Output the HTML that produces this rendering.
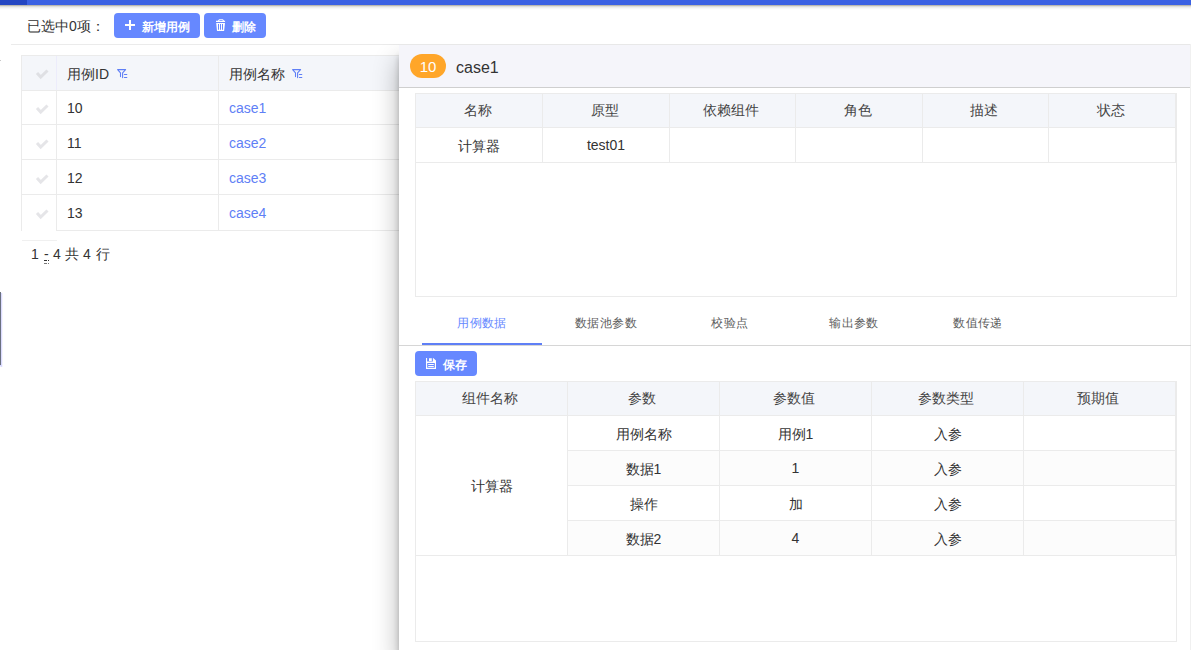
<!DOCTYPE html>
<html><head><meta charset="utf-8">
<style>
*{box-sizing:border-box;margin:0;padding:0}
html,body{width:1191px;height:650px;overflow:hidden;background:#fff;font-family:"Liberation Sans",sans-serif;color:#333;position:relative}
.abs{position:absolute}
#topbar{left:0;top:0;width:1191px;height:5px;background:#3b61e3}
#topbar .dk{position:absolute;left:0;top:0;width:27px;height:5px;background:#2446c2}
#topshadow{left:0;top:5px;width:1191px;height:5px;background:linear-gradient(rgba(40,30,0,.4),rgba(20,15,0,.14) 30%,rgba(0,0,0,.05) 55%,rgba(0,0,0,.01) 85%,rgba(0,0,0,0))}
#selinfo{left:27px;top:17px;font-size:14px;line-height:18px;color:#333}
.btn{position:absolute;height:25px;background:#6688ff;border-radius:4px;color:#fff;font-size:12px;font-weight:bold;line-height:25px}
.btn span{position:absolute;top:1.5px}
#hline{left:11px;top:44px;width:390px;height:1px;background:#ebebeb}
/* left table */
#lt{left:21px;top:55px;width:400px;height:176px}
.lcell{position:absolute;border-right:1px solid #ebebeb;border-bottom:1px solid #ebebeb}
#lthead{left:21px;top:55px;width:380px;height:36px;background:#f4f6fa;border-top:1px solid #ebebeb}
.chk{position:absolute}
.ltxt{position:absolute;font-size:14px;line-height:18px}
.link{color:#5f7ff6}
.pg{position:absolute;top:245px;font-size:14px;line-height:18px}
/* panel */
#pwrap{left:0;top:44px;width:1191px;height:606px;overflow:hidden}
#panel{left:399px;top:0;width:792px;height:606px;background:#fff;border-right:1px solid #f0f0f0;box-shadow:0 12px 6px rgba(0,0,0,.2),0 16px 24px rgba(0,0,0,.3)}
#phead{left:0;top:0;width:791px;height:44px;background:#f5f5fa;border-bottom:1px solid #cfcfcf;border-top:1px solid #e8e8e8}
#badge{left:11px;top:9px;width:36px;height:24px;border-radius:12px;background:#ffa629;color:#fff;font-size:15px;line-height:26px;text-align:center}
#ptitle{left:57px;top:12.5px;font-size:16px;line-height:20px;color:#333}
table{border-collapse:collapse;table-layout:fixed;position:absolute}
td,th{border:1px solid #ebebeb;text-align:center;font-size:14px;font-weight:normal;color:#333;padding:0}
td{padding-top:3px}
th{background:#f4f6fa;padding-right:3px;color:#444}
#t1{left:16px;top:49px;width:760px}
#t1box{left:16px;top:49px;width:762px;height:204px;border:1px solid #ebebeb}
#tabs{left:0;top:256px;width:792px;height:46px;border-bottom:1px solid #d6d6d6}
.tab{position:absolute;top:0;width:124px;height:45px;text-align:center;font-size:12px;letter-spacing:0.4px;line-height:47px;color:#606060}
.tab.act{color:#6688ff}
#tabul{left:23px;top:43px;width:120px;height:2px;background:#5f7ff6}
#t2box{left:16px;top:337px;width:762px;height:261px;border:1px solid #ebebeb}
#t2{left:16px;top:337px;width:760px}
.stripe td{background:#fcfcfc}
.up{position:relative;top:-1.5px}
#leftmark{left:0;top:292px;width:1px;height:73px;background:#6b7180}
</style></head><body>
<div id="topbar" class="abs"><div class="dk"></div></div>
<div id="topshadow" class="abs"></div>
<div id="selinfo" class="abs">已选中0项：</div>
<div class="btn" style="left:114px;top:13px;width:86px">
  <svg class="abs" style="left:11px;top:7px" width="10" height="10" viewBox="0 0 10 10"><rect x="0" y="4" width="10" height="2" fill="#fff"/><rect x="4" y="0" width="2" height="10" fill="#fff"/></svg>
  <span style="left:28px">新增用例</span>
</div>
<div class="btn" style="left:204px;top:13px;width:62px">
  <svg class="abs" style="left:12px;top:6px" width="10" height="13" viewBox="0 0 10 13"><path fill="#fff" fill-rule="evenodd" d="M1.8 1.8 L3.1 0.3 H6.9 L8.2 1.8 Z M3.4 0.9 H6.6 V1.8 H3.4 Z M0 1.7 H9.1 V3 H0 Z M0.2 3.9 H9 L8.1 12 H1 Z M2 5.1 H3 V10.7 H2 Z M4 5.1 H5 V10.7 H4 Z M6 5.1 H7 V10.7 H6 Z"/></svg>
  <span style="left:28px">删除</span>
</div>
<div id="hline" class="abs"></div>

<!-- left table -->
<div class="abs" style="left:21px;top:55px;width:380px;height:35px;background:#f4f6fa"></div>
<div class="abs" style="left:21px;top:55px;width:380px;height:1px;background:#ebebeb"></div>
<div class="abs" style="left:21px;top:55px;width:1px;height:176px;background:#ebebeb"></div>
<div class="abs" style="left:56px;top:56px;width:1px;height:34px;background:#ececfb"></div><div class="abs" style="left:56px;top:91px;width:1px;height:140px;background:#ebebeb"></div>
<div class="abs" style="left:218px;top:55px;width:1px;height:176px;background:#ebebeb"></div>
<div class="abs" style="left:21px;top:90px;width:380px;height:1px;background:#ebebeb"></div>
<div class="abs" style="left:21px;top:124px;width:380px;height:1px;background:#ebebeb"></div>
<div class="abs" style="left:21px;top:159px;width:380px;height:1px;background:#ebebeb"></div>
<div class="abs" style="left:21px;top:194px;width:380px;height:1px;background:#ebebeb"></div>
<div class="abs" style="left:56px;top:230px;width:345px;height:1px;background:#ebebeb"></div>
<div class="abs" style="left:22px;top:240px;width:35px;height:1px;background:#f0f0f0"></div>

<svg class="abs" style="left:0;top:0" width="60" height="240">
  <g fill="none" stroke="#dfe0e4" stroke-width="3" stroke-linecap="butt" stroke-linejoin="miter">
    <path d="M37 73 L40.7 77 L47.5 70.5"/>
  </g>
  <g fill="none" stroke="#e5e5e8" stroke-width="3" stroke-linecap="butt" stroke-linejoin="miter">
    <path d="M37 108 L40.7 112 L47.5 105.5"/>
    <path d="M37 143 L40.7 147 L47.5 140.5"/>
    <path d="M37 178 L40.7 182 L47.5 175.5"/>
    <path d="M37 213 L40.7 217 L47.5 210.5"/>
  </g>
</svg>
<div class="ltxt" style="left:67px;top:65px">用例ID</div>
<div class="ltxt" style="left:229px;top:65px">用例名称</div>
<svg class="abs" style="left:112px;top:62px" width="24" height="24" viewBox="0 0 24 24"><g fill="none" stroke="#5f7ff6" stroke-width="1.1" stroke-linecap="round" stroke-linejoin="round"><path d="M8.5 14.6 V10.8 L5.6 7.6 H13.6 L10.6 10.8 V15.6"/><path d="M12.4 12.5 H14.8"/><path d="M12.4 15.5 H14.8"/></g></svg>
<svg class="abs" style="left:287px;top:62px" width="24" height="24" viewBox="0 0 24 24"><g fill="none" stroke="#5f7ff6" stroke-width="1.1" stroke-linecap="round" stroke-linejoin="round"><path d="M8.5 14.6 V10.8 L5.6 7.6 H13.6 L10.6 10.8 V15.6"/><path d="M12.4 12.5 H14.8"/><path d="M12.4 15.5 H14.8"/></g></svg>
<div class="ltxt" style="left:67px;top:99px">10</div>
<div class="ltxt" style="left:67px;top:134px">11</div>
<div class="ltxt" style="left:67px;top:169px">12</div>
<div class="ltxt" style="left:67px;top:204px">13</div>
<div class="ltxt link" style="left:229px;top:99px">case1</div>
<div class="ltxt link" style="left:229px;top:134px">case2</div>
<div class="ltxt link" style="left:229px;top:169px">case3</div>
<div class="ltxt link" style="left:229px;top:204px">case4</div>
<div class="pg" style="left:31px">1</div><div class="pg" style="left:44px">-</div><div class="pg" style="left:53px">4</div><div class="pg" style="left:65px">共</div><div class="pg" style="left:83px">4</div><div class="pg" style="left:96px">行</div>
<svg class="abs" style="left:43px;top:259px" width="7" height="6"><g fill="#333"><rect x="1" y="1" width="2" height="1"/><rect x="3" y="1" width="1" height="1"/><rect x="5" y="1" width="1" height="1"/></g><g fill="#777"><rect x="1" y="4" width="2" height="1"/><rect x="3" y="4" width="1" height="1"/><rect x="5" y="4" width="1" height="1"/></g></svg>
<div class="abs" style="left:0;top:293px;width:3px;height:74px;background:linear-gradient(to right,#fff,#d2d2ff 40%,#eeeeff 70%,#fff)"></div><div class="abs" style="left:0;top:365px;width:2px;height:1px;background:#d8d8ff"></div><div id="leftmark" class="abs"></div><div class="abs" style="left:0;top:60px;width:1px;height:1px;background:#c8c8c8"></div>

<div id="pwrap" class="abs">
<div id="panel" class="abs">
  <div id="phead" class="abs">
    <div id="badge" class="abs">10</div>
    <div id="ptitle" class="abs">case1</div>
  </div>
  <div id="t1box" class="abs"></div>
  <table id="t1">
    <colgroup><col style="width:127px"><col style="width:127px"><col style="width:126px"><col style="width:127px"><col style="width:126px"><col style="width:127px"></colgroup>
    <tr style="height:34px"><th>名称</th><th>原型</th><th>依赖组件</th><th>角色</th><th>描述</th><th>状态</th></tr>
    <tr style="height:35px"><td>计算器</td><td><span class="up">test01</span></td><td></td><td></td><td></td><td></td></tr>
  </table>
  <div id="tabs" class="abs">
    <div class="tab act" style="left:21px">用例数据</div>
    <div class="tab" style="left:145px">数据池参数</div>
    <div class="tab" style="left:269px">校验点</div>
    <div class="tab" style="left:393px">输出参数</div>
    <div class="tab" style="left:517px">数值传递</div>
    <div id="tabul" class="abs"></div>
  </div>
  <div class="btn" style="left:16px;top:307px;width:62px">
    <svg class="abs" style="left:11px;top:7px" width="10" height="11" viewBox="0 0 10 11"><path fill="#fff" fill-rule="evenodd" d="M0 0 H7.2 L10 2.4 V11 H0 Z M1.1 0 H6.9 V3.6 H1.1 Z M3 0.2 H5.8 V3 H3 Z M1.2 5 H8.8 V9.8 H1.2 Z M2.2 6.1 H7.8 V6.9 H2.2 Z M2.2 8.1 H7.8 V8.9 H2.2 Z"/></svg>
    <span style="left:28px">保存</span>
  </div>
  <div id="t2box" class="abs"></div>
  <table id="t2">
    <colgroup><col style="width:152px"><col style="width:152px"><col style="width:152px"><col style="width:152px"><col style="width:152px"></colgroup>
    <tr style="height:34px"><th>组件名称</th><th>参数</th><th>参数值</th><th>参数类型</th><th>预期值</th></tr>
    <tr style="height:35px"><td rowspan="4" style="background:#fff">计算器</td><td>用例名称</td><td>用例1</td><td>入参</td><td></td></tr>
    <tr style="height:35px" class="stripe"><td>数据1</td><td><span class="up">1</span></td><td>入参</td><td></td></tr>
    <tr style="height:35px"><td>操作</td><td>加</td><td>入参</td><td></td></tr>
    <tr style="height:35px" class="stripe"><td>数据2</td><td><span class="up">4</span></td><td>入参</td><td></td></tr>
  </table>
</div>
</div>
</body></html>
